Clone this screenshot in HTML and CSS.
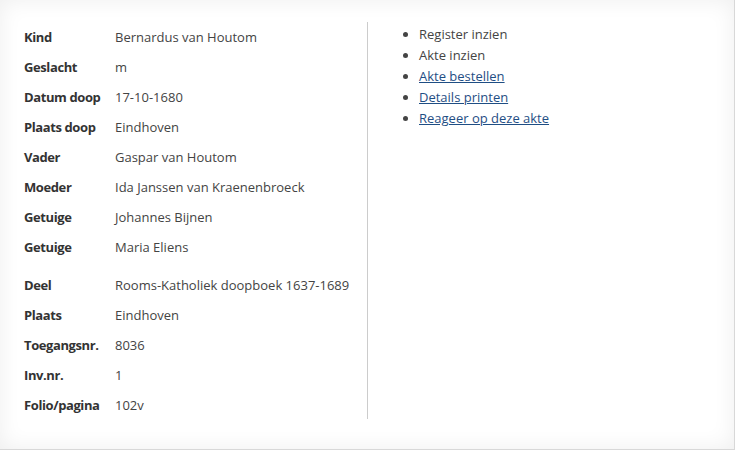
FILE: index.html
```html
<!DOCTYPE html>
<html lang="nl">
<head>
    <meta charset="UTF-8">
    <title>Doopakte</title>
    <link rel="stylesheet" href="styles.css">
</head>
<body>
    <div class="panel">
        <div class="record">
            <table class="details">
                <tr><th>Kind</th><td>Bernardus van Houtom</td></tr>
                <tr><th>Geslacht</th><td>m</td></tr>
                <tr><th>Datum doop</th><td>17-10-1680</td></tr>
                <tr><th>Plaats doop</th><td>Eindhoven</td></tr>
                <tr><th>Vader</th><td>Gaspar van Houtom</td></tr>
                <tr><th>Moeder</th><td>Ida Janssen van Kraenenbroeck</td></tr>
                <tr><th>Getuige</th><td>Johannes Bijnen</td></tr>
                <tr><th>Getuige</th><td>Maria Eliens</td></tr>
            </table>
            <table class="details source">
                <tr><th>Deel</th><td>Rooms-Katholiek doopboek 1637-1689</td></tr>
                <tr><th>Plaats</th><td>Eindhoven</td></tr>
                <tr><th>Toegangsnr.</th><td>8036</td></tr>
                <tr><th>Inv.nr.</th><td>1</td></tr>
                <tr><th>Folio/pagina</th><td>102v</td></tr>
            </table>
        </div>
        <div class="actions">
            <ul>
                <li>Register inzien</li>
                <li>Akte inzien</li>
                <li><a href="#">Akte bestellen</a></li>
                <li><a href="#">Details printen</a></li>
                <li><a href="#">Reageer op deze akte</a></li>
            </ul>
        </div>
    </div>
</body>
</html>
```
FILE: styles.css
```css
body {
    margin: 0;
    font-family: "Open Sans", "Noto Sans", sans-serif;
    font-size: 13px;
    color: #444;
    background: #fff;
}
.panel {
    display: flex;
    align-items: flex-start;
    width: 735px;
    height: 450px;
    padding-top: 22px;
    box-sizing: border-box;
    background: #fff;
    border-right: 1px solid #d8d8d8;
    border-bottom: 1px solid #d8d8d8;
    box-shadow: inset 0 0 22px rgba(0, 0, 0, 0.07);
}
.record {
    width: 368px;
    box-sizing: border-box;
    padding-left: 24px;
    border-right: 1px solid #ccc;
    height: 397px;
}
.details {
    border-collapse: collapse;
}
.details th,
.details td {
    height: 30px;
    padding: 0;
    text-align: left;
    vertical-align: middle;
    line-height: 30px;
}
.details th {
    width: 91px;
    font-weight: bold;
    color: #333;
    letter-spacing: -0.4px;
    white-space: nowrap;
}
.details.source {
    margin-top: 8px;
}
.actions ul {
    margin: 2px 0 0;
    padding-left: 51px;
    line-height: 21px;
}
.actions li {
    color: #444;
}
.actions a {
    color: #1f4e84;
    text-decoration: underline;
}
```
